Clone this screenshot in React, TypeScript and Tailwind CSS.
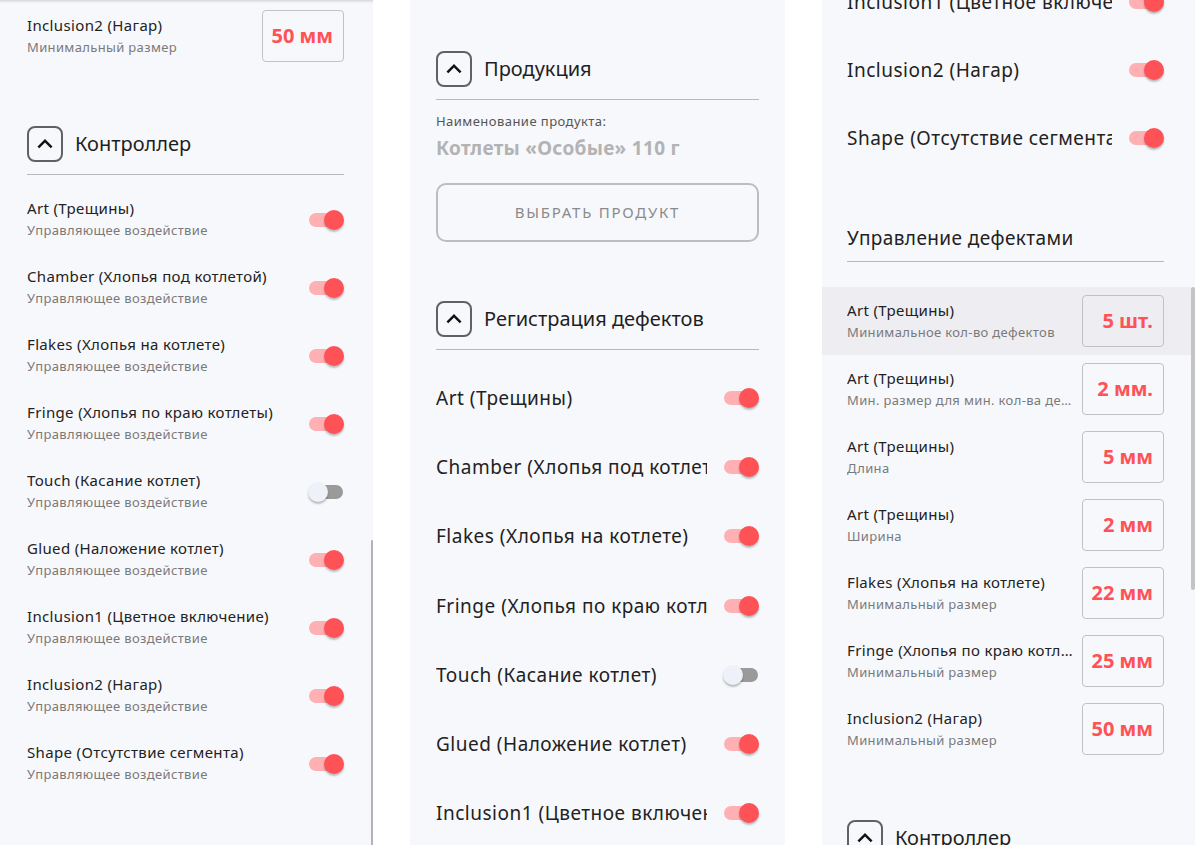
import React from "react";

const RED = "#ff5257";

type Item = { title: string; on: boolean };

const controllerItems: Item[] = [
  { title: "Art (Трещины)", on: true },
  { title: "Chamber (Хлопья под котлетой)", on: true },
  { title: "Flakes (Хлопья на котлете)", on: true },
  { title: "Fringe (Хлопья по краю котлеты)", on: true },
  { title: "Touch (Касание котлет)", on: false },
  { title: "Glued (Наложение котлет)", on: true },
  { title: "Inclusion1 (Цветное включение)", on: true },
  { title: "Inclusion2 (Нагар)", on: true },
  { title: "Shape (Отсутствие сегмента)", on: true },
];

const registrationItems: Item[] = [
  { title: "Art (Трещины)", on: true },
  { title: "Chamber (Хлопья под котлетой)", on: true },
  { title: "Flakes (Хлопья на котлете)", on: true },
  { title: "Fringe (Хлопья по краю котлеты)", on: true },
  { title: "Touch (Касание котлет)", on: false },
  { title: "Glued (Наложение котлет)", on: true },
  { title: "Inclusion1 (Цветное включение)", on: true },
];

const defectRows = [
  { title: "Art (Трещины)", sub: "Минимальное кол-во дефектов", value: "5 шт.", active: true },
  { title: "Art (Трещины)", sub: "Мин. размер для мин. кол-ва дефектов", value: "2 мм." },
  { title: "Art (Трещины)", sub: "Длина", value: "5 мм" },
  { title: "Art (Трещины)", sub: "Ширина", value: "2 мм" },
  { title: "Flakes (Хлопья на котлете)", sub: "Минимальный размер", value: "22 мм" },
  { title: "Fringe (Хлопья по краю котлеты)", sub: "Минимальный размер", value: "25 мм" },
  { title: "Inclusion2 (Нагар)", sub: "Минимальный размер", value: "50 мм" },
];

const Toggle: React.FC<{ on: boolean }> = ({ on }) => (
  <div className="relative h-5 w-9 shrink-0">
    <div
      className={
        "absolute left-[1px] top-[3px] h-[14px] w-[34px] rounded-full " +
        (on ? "bg-[#ffb0b2]" : "bg-[#9a9a9a]")
      }
    />
    <div
      className={
        "absolute top-0 h-5 w-5 rounded-full shadow-[0_2px_2px_rgba(0,0,0,0.25)] " +
        (on ? "right-0 bg-[#ff5257]" : "left-0 bg-[#eef1f8]")
      }
    />
  </div>
);

const SectionHeader: React.FC<{ title: string }> = ({ title }) => (
  <div className="flex h-9 items-center gap-[12px]">
    <div className="flex h-9 w-9 items-center justify-center rounded-[8px] border-2 border-[#616161]">
      <svg width="30" height="30" viewBox="0 0 24 24">
        <path d="M12 8l-6 6 1.41 1.41L12 10.83l4.59 4.58L18 14z" fill="#111" />
      </svg>
    </div>
    <span className="text-[20px] leading-6 text-[#1f1f1f]">{title}</span>
  </div>
);

const ValueBox: React.FC<{ value: string }> = ({ value }) => (
  <div className="flex h-[52px] w-[82px] shrink-0 items-center justify-end rounded-[4px] border border-[#c2c2c2] pr-[10px]">
    <span className="text-[20px] font-bold leading-6" style={{ color: RED }}>
      {value}
    </span>
  </div>
);

const Title: React.FC<{ children: React.ReactNode }> = ({ children }) => (
  <div className="truncate text-[15px] leading-5 tracking-[0.35px] text-[#222]">{children}</div>
);

const Sub: React.FC<{ children: React.ReactNode }> = ({ children }) => (
  <div className="mt-[2px] truncate text-[13px] leading-5 tracking-[0.35px] text-[#7a7a7a]">{children}</div>
);

const ValueRow: React.FC<{ title: string; sub: string; value: string; active?: boolean }> = ({
  title,
  sub,
  value,
  active,
}) => (
  <div className={"flex h-[68px] items-center pl-[25px] pr-[27px] " + (active ? "bg-[#ededf2]" : "")}>
    <div className="mr-[4px] min-w-0 flex-1">
      <Title>{title}</Title>
      <Sub>{sub}</Sub>
    </div>
    <ValueBox value={value} />
  </div>
);

const ToggleRowSmall: React.FC<Item> = ({ title, on }) => (
  <div className="flex h-[68px] items-center justify-between">
    <div className="min-w-0">
      <Title>{title}</Title>
      <Sub>Управляющее воздействие</Sub>
    </div>
    <div className="mt-[2px]">
      <Toggle on={on} />
    </div>
  </div>
);

const ToggleRowLarge: React.FC<Item & { tall?: boolean }> = ({ title, on, tall }) => (
  <div className={"flex items-center gap-4 " + (tall ? "h-[69.3px]" : "h-[68px]")}>
    <div className="min-w-0 flex-1 overflow-hidden whitespace-nowrap text-[19px] leading-6 tracking-[0.5px] text-[#222]">
      {title}
    </div>
    <Toggle on={on} />
  </div>
);

export default function App() {
  return (
    <div className="flex h-[845px] w-[1195px] overflow-hidden bg-white font-['Noto_Sans',sans-serif]">
      {/* left column */}
      <div className="relative h-full w-[373px] shrink-0 overflow-hidden bg-[#f7f8fc] shadow-[inset_0_3px_3px_-2px_rgba(0,0,0,0.18)]">
        <div className="pl-[27px] pr-[29px] pt-[2px]">
          <div className="flex h-[68px] items-center justify-between">
            <div>
              <Title>Inclusion2 (Нагар)</Title>
              <Sub>Минимальный размер</Sub>
            </div>
            <ValueBox value="50 мм" />
          </div>
          <div className="mt-[56px]">
            <SectionHeader title="Контроллер" />
          </div>
          <div className="mt-[12px] h-px bg-[#b8b8b8]" />
          <div className="mt-[10px]">
            {controllerItems.map((it, i) => (
              <ToggleRowSmall key={i} {...it} />
            ))}
          </div>
        </div>
        <div className="absolute right-0 top-[540px] h-[310px] w-[2px] rounded-full bg-[#b3b3b3]" />
      </div>

      <div className="w-[37px] shrink-0" />

      {/* middle column */}
      <div className="h-full w-[375px] shrink-0 overflow-hidden bg-[#f7f8fc] px-[26px] pt-[51px]">
        <SectionHeader title="Продукция" />
        <div className="mt-[12px] h-px bg-[#b8b8b8]" />
        <div className="mt-[11px] text-[13px] leading-5 tracking-[0.45px] text-[#555]">Наименование продукта:</div>
        <div className="mt-[5px] text-[19px] font-bold leading-6 tracking-[0.3px] text-[#b3b3b3]">
          Котлеты «Особые» 110 г
        </div>
        <div className="mt-[23px] flex h-[59px] items-center justify-center rounded-[10px] border-2 border-[#bdbdbd] text-[15px] tracking-[1.75px] text-[#8a8a8a]">
          ВЫБРАТЬ ПРОДУКТ
        </div>
        <div className="mt-[59px]">
          <SectionHeader title="Регистрация дефектов" />
        </div>
        <div className="mt-[12px] h-px bg-[#b8b8b8]" />
        <div className="mt-[13px]">
          {registrationItems.map((it, i) => (
            <ToggleRowLarge key={i} {...it} tall />
          ))}
        </div>
      </div>

      <div className="w-[37px] shrink-0" />

      {/* right column */}
      <div className="relative h-full w-[373px] shrink-0 overflow-hidden bg-[#f7f8fc] pr-[4px]">
        <div className="-mt-[32px] pl-[25px] pr-[27px]">
          <ToggleRowLarge title="Inclusion1 (Цветное включение)" on />
          <ToggleRowLarge title="Inclusion2 (Нагар)" on />
          <ToggleRowLarge title="Shape (Отсутствие сегмента)" on />
          <div className="mt-[54px] border-b border-[#b8b8b8] pb-[11px] text-[19px] leading-6 tracking-[0.4px] text-[#222]">
            Управление дефектами
          </div>
        </div>
        <div className="mt-[25px]">
          {defectRows.map((r, i) => (
            <ValueRow key={i} {...r} />
          ))}
        </div>
        <div className="mt-[57px] pl-[25px]">
          <SectionHeader title="Контроллер" />
        </div>
        <div className="absolute right-0 top-[287px] h-[303px] w-[4px] rounded-full bg-[#c4c4c4]" />
      </div>
    </div>
  );
}
